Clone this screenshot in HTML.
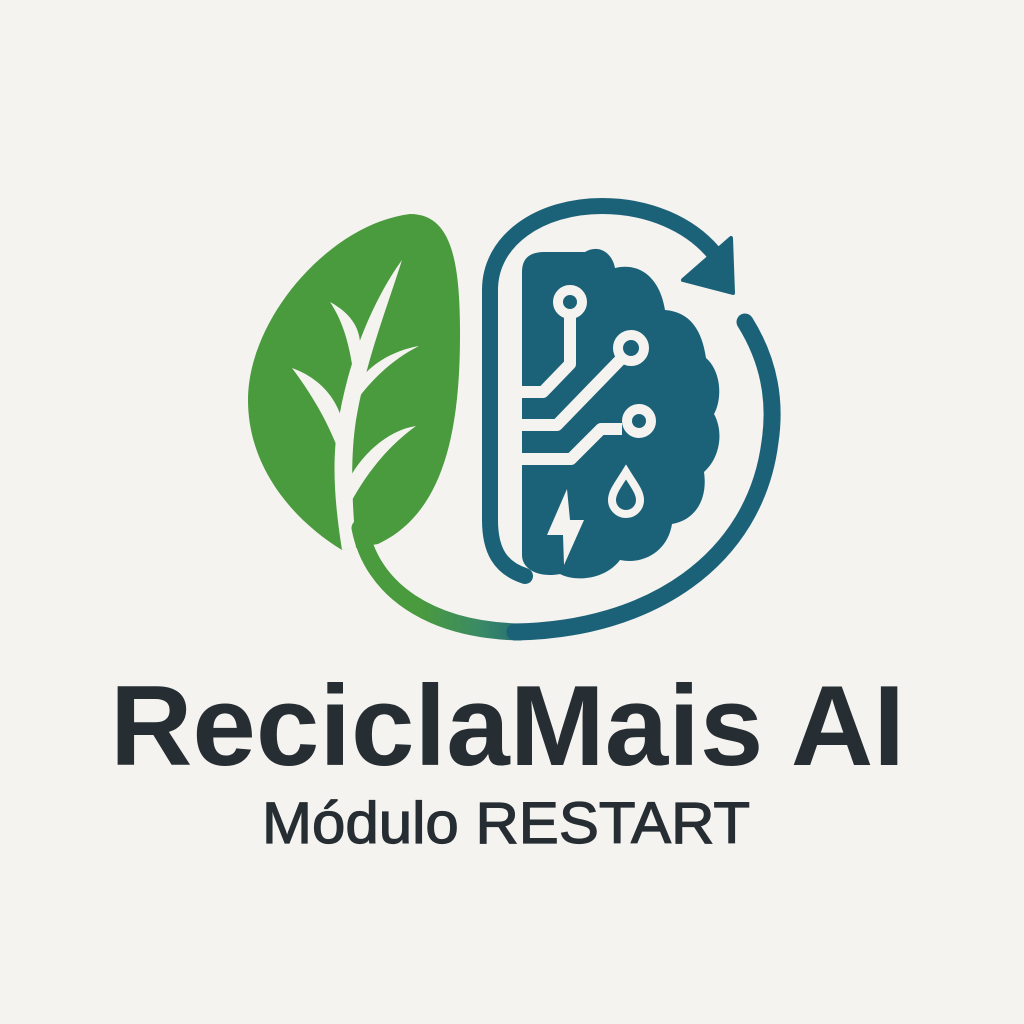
<!DOCTYPE html>
<html><head><meta charset="utf-8"><style>
html,body{margin:0;padding:0;background:#f4f3ef;}
svg{display:block}
</style></head><body>
<svg width="1024" height="1024" viewBox="0 0 1024 1024" xmlns="http://www.w3.org/2000/svg">
<defs>
<linearGradient id="g" x1="420" y1="0" x2="540" y2="0" gradientUnits="userSpaceOnUse">
<stop offset="0" stop-color="#4a9a3e"/><stop offset="0.5" stop-color="#3a8a66"/><stop offset="1" stop-color="#1b6279"/>
</linearGradient>
</defs>
<rect width="1024" height="1024" fill="#f4f3ef"/>
<path d="M410 214 C452 214 460 262 460 335 C460 440 440 515 378 544 L342 550 C296 522 248 470 248 400 C248 318 330 224 410 214 Z" fill="#4a9a3e"/>
<g fill="#f4f3ef">
<path d="M342 550 C334 500 332 460 338 424 C348 360 373 300 402 260 C388 305 366 360 356 420 C350 460 352 500 356 548 Z"/>
<path d="M292 368 C320 378 340 400 344 430 L340 454 C327 420 312 395 292 368 Z"/>
<path d="M330 302 C352 314 362 330 360 352 L352 364 C348 340 342 320 330 302 Z"/>
<path d="M419 346 C395 350 368 364 356 386 L354 404 C372 378 395 358 419 346 Z"/>
<path d="M416 426 C388 430 360 455 346 485 L350 504 C368 470 390 445 416 426 Z"/>
</g>
<path d="M360 528 C372 590 430 630 520 632" fill="none" stroke="url(#g)" stroke-width="17" stroke-linecap="round"/>
<path d="M745 322 C770 362 776 402 770 442 C755 560 650 630 515 632" fill="none" stroke="#1b6279" stroke-width="17" stroke-linecap="round"/>
<path d="M525 576 C500 568 490 550 490 520 L490 290 C490 240 540 206 602 206 C650 206 690 225 713 252" fill="none" stroke="#1b6279" stroke-width="16" stroke-linecap="round"/>
<path d="M731 238 L733 293 L683 280 Z" fill="#1b6279" stroke="#1b6279" stroke-width="4" stroke-linejoin="round"/>
<path d="M522 272 C522 258 530 252 545 252 L585 252 C598 244 612 252 615 268 C640 262 660 278 665 310 C690 312 702 330 706 358 C722 372 722 400 714 414 C724 432 720 458 704 472 C708 500 695 520 672 524 C668 550 645 565 620 560 C605 580 575 582 560 574 C540 578 522 570 522 555 Z" fill="#1b6279"/>
<g fill="none" stroke="#f4f3ef" stroke-width="12" stroke-linejoin="round">
<path d="M520 392 L543 392 L570 364 L570 318"/>
<path d="M520 425 L557 425 L620 360"/>
<path d="M520 459 L571 459 L601 429 L622 429"/>
</g>
<g fill="#1b6279" stroke="#f4f3ef" stroke-width="10">
<circle cx="570" cy="302" r="12"/>
<circle cx="631" cy="348" r="13"/>
<circle cx="639" cy="421" r="12"/>
</g>
<path d="M626 472 C618 485 612 492 612 500 A14 14 0 0 0 640 500 C640 492 634 485 626 472 Z" fill="#1b6279" stroke="#f4f3ef" stroke-width="8"/>
<path d="M567 489 L547 535 L563 535 L564 565 L584 520 L570 520 Z" fill="#f4f3ef"/>
<text x="110" y="765" textLength="795" lengthAdjust="spacingAndGlyphs" font-family="Liberation Sans, sans-serif" font-weight="bold" font-size="114" fill="#262d33">ReciclaMais AI</text>
<text x="262" y="843" textLength="488" lengthAdjust="spacingAndGlyphs" font-family="Liberation Sans, sans-serif" font-size="58" fill="#262d33" stroke="#262d33" stroke-width="1.2">Módulo RESTART</text>
</svg>
</body></html>
